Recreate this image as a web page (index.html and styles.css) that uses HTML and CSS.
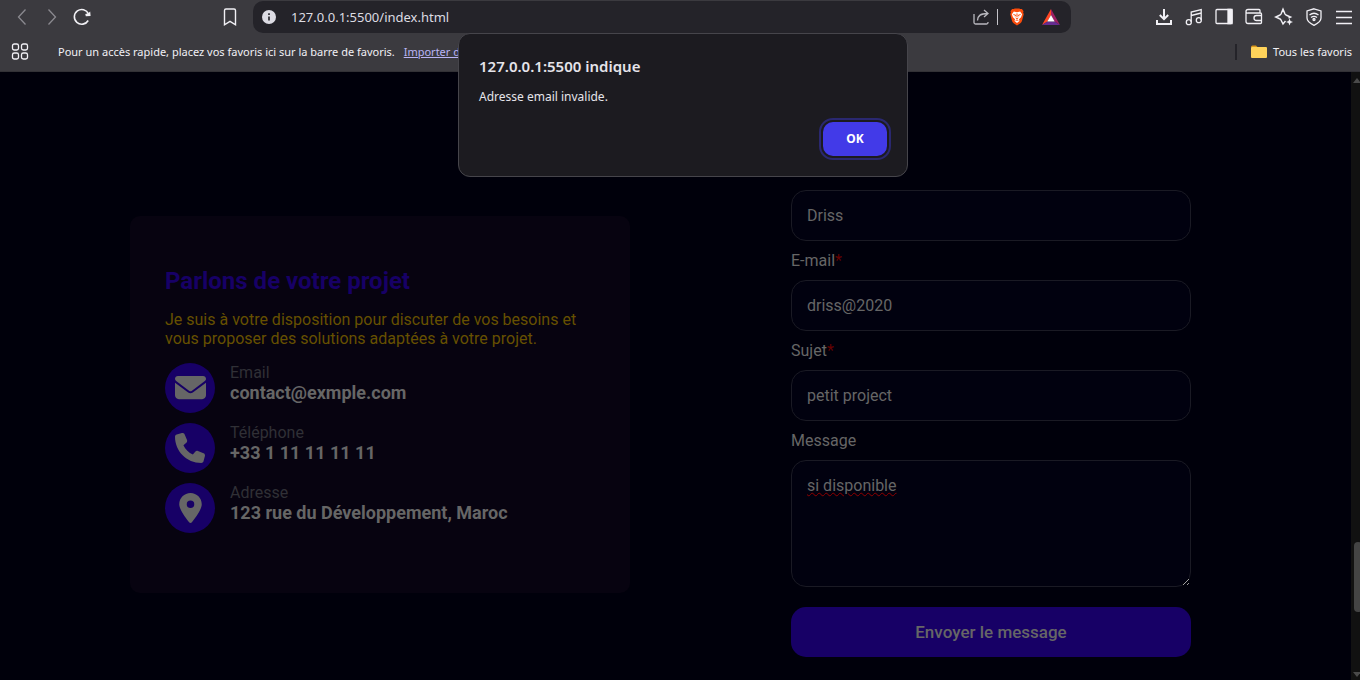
FILE: index.html
```html
<!DOCTYPE html>
<html lang="fr">
<head>
<meta charset="utf-8">
<meta name="viewport" content="width=device-width, initial-scale=1">
<title>Contact</title>
<link rel="stylesheet" href="styles.css">
</head>
<body>
<header class="chrome">
  <div class="toolbar">
    <nav class="nav-buttons">
      <button class="icon-btn dim" aria-label="Retour"><svg width="20" height="20" viewBox="0 0 20 20"><path d="M13.5 2.5 6.500 10l7 7.500"/></svg></button>
      <button class="icon-btn dim" aria-label="Avancer"><svg width="20" height="20" viewBox="0 0 20 20"><path d="m6.500 2.500 7 7.500-7 7.500"/></svg></button>
      <button class="icon-btn" aria-label="Recharger"><svg width="20" height="20" viewBox="0 0 20 20"><path stroke-width="1.600" d="M16.200 13.500A7.400 7.400 0 1 1 16.500 6.800"/><path d="m18.200 4.500.400 4.500-4.800.300-.500-2.300 3-.800z" fill="currentColor" stroke="none"/></svg></button>
    </nav>
    <button class="icon-btn" aria-label="Ajouter aux favoris"><svg width="20" height="20" viewBox="0 0 20 20"><path stroke-width="1.400" d="M4.500 3.500q0-1.500 1.500-1.500h8q1.500 0 1.500 1.500v14.300l-5.500-3.500-5.500 3.500z"/></svg></button>
    <div class="address">
      <button class="info-btn" aria-label="Informations du site"><svg width="16" height="16" viewBox="0 0 16 16"><circle cx="8" cy="8" r="7" fill="#dddce4" stroke="none"/><path d="M8 7.500v4M8 4.200v1.800" stroke="#2a292f" stroke-width="1.700"/></svg></button>
      <input class="url" type="text" aria-label="Adresse" value="127.0.0.1:5500/index.html">
      <button class="share-btn" aria-label="Partager"><svg width="18" height="18" viewBox="0 0 18 18"><path d="M2 6v8.500q0 1.500 1.500 1.500h11q1.500 0 1.500-1.500V14M5.500 12.500C5.500 8 8 5.500 15.500 5.500M12 2l4 3.500-4 3.500"/></svg></button>
      <span class="bar-divider"></span>
      <button class="shield-btn" aria-label="Brave Shields"><svg width="18" height="18" viewBox="0 0 18 20"><path d="m5.500 1 1-.500h5l1 .500 2 .200 1.800 2.300-.500 1.200.700 2.300-2 7.500q-.500 1.500-1.800 2.500L9 19.500 5.300 17q-1.300-1-1.800-2.500L1.500 7l.700-2.300-.500-1.200L3.500 1.200z" fill="#fb4c0b" stroke="none"/><path d="m5.500 4 3.500.600 3.500-.600 2.200 3-1.200 3.300-2.300 2.200.600 2L9 16.700 6.200 14.500l.600-2-2.300-2.200L3.300 7z" fill="#fff" stroke="none"/><path d="m5 7.300 2.500.700-.5 1.300M13 7.300l-2.500.700.5 1.300M9 6v4M7.500 11 9 11.800l1.500-.800M7.500 14 9 13.200l1.500.800" stroke="#fb4c0b" stroke-width="1.100"/></svg></button>
      <button class="bat-btn" aria-label="Brave Rewards"><svg width="20" height="18" viewBox="0 0 20 18"><g stroke="none"><path d="M10 1 1 17l5.500-3.500L10 7z" fill="#ff4724"/><path d="M10 1v6l3.500 6.500L19 17z" fill="#9e1f63"/><path d="m1 17 5.500-3.500h7L19 17z" fill="#662d91"/><path d="m10 7-3.700 6.500h7.400z" fill="#fff"/></g></svg></button>
    </div>
    <div class="tools">
      <button class="icon-btn" aria-label="Téléchargements"><svg width="20" height="20" viewBox="0 0 20 20"><path stroke-width="2" d="M10 2v10M5.800 8 10 12.200 14.200 8M3 13v4h14v-4"/></svg></button>
      <button class="icon-btn" aria-label="Multimédia"><svg width="20" height="20" viewBox="0 0 20 20"><path d="M7.200 15V5l10-2.500V13M7.200 8.500l10-2.500"/><circle cx="4.800" cy="15.200" r="2.500"/><circle cx="14.800" cy="13.200" r="2.500"/></svg></button>
      <button class="icon-btn" aria-label="Panneau latéral"><svg width="20" height="20" viewBox="0 0 20 20"><rect x="2" y="2.500" width="16" height="14" rx="1"/><path d="M14 2.500h4v14h-4z" fill="currentColor"/></svg></button>
      <button class="icon-btn" aria-label="Portefeuille"><svg width="20" height="20" viewBox="0 0 20 20"><path d="M16 6V3.500q0-1-1-1H4Q2 2.500 2 4.500T4 6h12.500q1 0 1 1v8.500q0 1-1 1H4q-2 0-2-2v-10M17.500 8.500h-5a2.300 2.300 0 0 0 0 5h5"/></svg></button>
      <button class="icon-btn" aria-label="Leo"><svg width="20" height="20" viewBox="0 0 20 20"><path stroke-width="1.500" d="M11.500 14 9 17 7 13q-.500-1-1.500-1.300L1.800 10l3.700-1.700Q6.500 8 7 7l2-4.800L11 7q.500 1 1.500 1.300L16.500 10l-2 1"/><path d="m15.500 11.500 1 2.500 2.500 1-2.500 1-1 2.500-1-2.500-2.500-1 2.500-1z" fill="currentColor" stroke="none"/></svg></button>
      <button class="icon-btn" aria-label="VPN"><svg width="20" height="20" viewBox="0 0 20 20"><path d="m10 1.800 7 2.200v7q0 4-7 7.300Q3 15 3 11V4zM5.500 8q4.500-3.500 9 0M7 10.500q3-2.300 6 0"/><circle cx="10" cy="12.500" r="1"/></svg></button>
      <button class="icon-btn" aria-label="Menu"><svg width="20" height="20" viewBox="0 0 20 20"><path d="M2 4.500h16M2 10.500h16M2 16.500h16"/></svg></button>
    </div>
  </div>
  <div class="bookmarks">
    <button class="icon-btn" aria-label="Applications"><svg width="20" height="20" viewBox="0 0 20 20"><rect x="2.500" y="2" width="6" height="6" rx="1.800"/><rect x="11.500" y="2" width="6" height="6" rx="1.800"/><rect x="2.500" y="11" width="6" height="6" rx="1.800"/><rect x="11.500" y="11" width="6" height="6" rx="1.800"/></svg></button>
    <p class="hint">Pour un accès rapide, placez vos favoris ici sur la barre de favoris. <a href="#">Importer des</a></p>
    <span class="mark-divider"></span>
    <button class="all-marks"><svg width="16" height="14" viewBox="0 0 16 14"><path d="M0 2q0-1.500 1.500-1.500H5L7 2.500H0z" fill="#d9951a" stroke="none"/><rect y="2" width="16" height="11" rx="1" fill="#ffd35a" stroke="none"/></svg>Tous les favoris</button>
  </div>
</header>

<div class="viewport">
  <main class="contact">
    <section class="card">
      <h2>Parlons de votre projet</h2>
      <p class="lead">Je suis à votre disposition pour discuter de vos besoins et vous proposer des solutions adaptées à votre projet.</p>
      <ul class="infos">
        <li>
          <span class="badge"><svg width="31" height="31" viewBox="0 0 512 512"><path d="M48 64C21.500 64 0 85.500 0 112c0 15.100 7.100 29.300 19.200 38.400L236.800 313.600c11.400 8.500 27 8.500 38.400 0L492.800 150.400c12.100-9.100 19.200-23.300 19.200-38.400c0-26.500-21.500-48-48-48H48zM0 176V384c0 35.300 28.700 64 64 64H448c35.300 0 64-28.700 64-64V176L294.400 339.200c-22.800 17.100-54 17.100-76.800 0L0 176z"/></svg></span>
          <div><span class="kind">Email</span><strong>contact@exmple.com</strong></div>
        </li>
        <li>
          <span class="badge"><svg width="30" height="30" viewBox="0 0 512 512"><path d="M164.900 24.600c-7.700-18.600-28-28.500-47.400-23.200l-88 24C12.100 30.200 0 46 0 64C0 311.400 200.600 512 448 512c18 0 33.800-12.100 38.600-29.500l24-88c5.300-19.400-4.600-39.700-23.200-47.400l-96-40c-16.300-6.800-35.200-2.100-46.300 11.600L304.700 368C234.300 334.700 177.300 277.700 144 207.300L193.300 167c13.700-11.200 18.400-30 11.600-46.300l-40-96z"/></svg></span>
          <div><span class="kind">Téléphone</span><strong>+33 1 11 11 11 11</strong></div>
        </li>
        <li>
          <span class="badge"><svg width="23" height="30" viewBox="0 0 384 512"><path d="M215.700 499.200C267 435 384 279.400 384 192C384 86 298 0 192 0S0 86 0 192c0 87.400 117 243 168.300 307.200c12.300 15.300 35.100 15.300 47.400 0zM192 128a64 64 0 1 1 0 128 64 64 0 1 1 0-128z"/></svg></span>
          <div><span class="kind">Adresse</span><strong>123 rue du Développement, Maroc</strong></div>
        </li>
      </ul>
    </section>
    <form class="form">
      <input type="text" aria-label="Nom" value="Driss">
      <label for="email">E-mail<span class="req">*</span></label>
      <input id="email" type="text" value="driss@2020">
      <label for="subject">Sujet<span class="req">*</span></label>
      <input id="subject" type="text" value="petit project">
      <label for="message">Message</label>
      <textarea id="message">si disponible</textarea>
      <button class="send" type="button">Envoyer le message</button>
    </form>
  </main>
  <div class="scrollbar" aria-hidden="true">
    <span class="arrow up"></span>
    <span class="track-before"></span>
    <span class="thumb"></span>
    <span class="track-after"></span>
    <span class="arrow down"></span>
  </div>
</div>

<dialog class="alert" open aria-labelledby="alert-title">
  <h1 id="alert-title">127.0.0.1:5500 indique</h1>
  <p>Adresse email invalide.</p>
  <button class="ok" type="button">OK</button>
</dialog>
</body>
</html>
```
FILE: styles.css
```css
* { box-sizing: border-box; }

body {
  margin: 0;
  min-height: 100vh;
  display: flex;
  flex-direction: column;
  overflow: hidden;
  background: #00000b;
  font-family: Roboto, sans-serif;
}

h1, h2, p, ul { margin: 0; padding: 0; }

button {
  border: 0;
  padding: 0;
  background: none;
  color: inherit;
  font: inherit;
}

/* Browser bars */
.chrome {
  background: #3b3a3f;
  border-bottom: 1px solid #323136;
  color: #f1f0f5;
  font-family: "Segoe UI", "Noto Sans", sans-serif;
}

.chrome svg {
  display: block;
  fill: none;
  stroke: currentColor;
  stroke-width: 1.3;
}

.toolbar {
  display: flex;
  align-items: center;
  height: 34px;
  padding: 0 1px 0 7px;
}

.nav-buttons, .tools { display: flex; }
.nav-buttons { margin-right: auto; }

.icon-btn {
  flex: none;
  width: 30px;
  height: 30px;
  display: grid;
  place-items: center;
}

.dim { color: #8b8a90; }

.address {
  flex: 0 1 818px;
  height: 32px;
  margin: 0 78px 0 8px;
  padding: 0 10px 0 8px;
  display: flex;
  align-items: center;
  background: #242329;
  border-radius: 10px;
}

.url {
  flex: 1;
  min-width: 0;
  margin-left: 14px;
  padding: 0;
  border: 0;
  background: none;
  color: #dddce2;
  font: 13px/20px "Segoe UI", "Noto Sans", sans-serif;
}

.share-btn { color: #b9b8be; }

.bar-divider {
  width: 1px;
  height: 16px;
  margin: 0 10px 0 7px;
  background: #c4c3c9;
}

.bat-btn { margin-left: 15px; }

.bookmarks {
  display: flex;
  align-items: center;
  height: 37px;
  padding: 0 8px 2px 5px;
  font-size: 11px;
  line-height: 16px;
  white-space: nowrap;
}

.hint { margin: 0 auto 0 23px; }

.hint a {
  margin-left: 6px;
  color: #b9b4f5;
}

.mark-divider {
  width: 2px;
  height: 16px;
  margin-right: 14px;
  background: #242329;
}

.all-marks {
  display: flex;
  align-items: center;
  gap: 6px;
}

/* Page */
.viewport {
  flex: 1;
  display: flex;
}

.contact {
  flex: 1;
  display: flex;
  justify-content: center;
  align-items: center;
  gap: 161px;
  padding: 79px 30px 23px 0;
}

.card {
  flex: 0 1 500px;
  padding: 51px 35px 60px;
  background: #070310;
  border-radius: 10px;
}

.card h2 {
  color: #170066;
  font-size: 24px;
  line-height: 29px;
}

.lead {
  margin: 14px 0 15px;
  color: #665000;
  font-size: 16px;
  line-height: 19px;
}

.infos {
  display: grid;
  gap: 10px;
  list-style: none;
}

.infos li {
  display: flex;
  gap: 15px;
}

.badge {
  flex: none;
  width: 50px;
  height: 50px;
  display: grid;
  place-items: center;
  background: #170066;
  border-radius: 50%;
  fill: #666;
}

.kind {
  display: block;
  color: #303036;
  font-size: 16px;
  line-height: 19px;
}

.infos strong {
  display: block;
  color: #666;
  font-size: 18px;
  line-height: 21px;
}

.form {
  flex: 0 1 400px;
  display: grid;
  gap: 10px;
  padding-top: 39px;
  color: #666;
  font-size: 16px;
  line-height: 19px;
}

.req { color: #660000; }

.form input, .form textarea {
  width: 100%;
  height: 51px;
  padding: 15px;
  border: 1px solid #1a1a24;
  border-radius: 15px;
  background: #01010f;
  color: #666;
  font: 16px/19px Roboto, sans-serif;
}

.form textarea {
  height: 127px;
  text-decoration: underline wavy #900000 1px;
}

.send {
  height: 50px;
  margin-top: 10px;
  border-radius: 15px;
  background: #170066;
  color: #666;
  font-size: 17px;
  font-weight: 500;
}

.scrollbar {
  width: 9px;
  display: flex;
  flex-direction: column;
  align-items: flex-start;
  padding: 6px 0 3px 2px;
  overflow: hidden;
  background: #111;
}

.arrow {
  border: 4px solid transparent;
}

.up { border-top: 0; border-bottom: 5px solid #4a4a4a; }
.down { border-bottom: 0; border-top: 5px solid #4a4a4a; }
.track-before { flex: 459; }
.track-after { flex: 60; }

.thumb {
  width: 8px;
  height: 70px;
  margin-left: 1px;
  border-radius: 4px;
  background: #444;
}

/* Alert box above the page */
.alert {
  position: absolute;
  top: 33px;
  left: 458px;
  width: 450px;
  margin: 0;
  padding: 20px;
  display: flex;
  flex-direction: column;
  border: 1px solid #46454b;
  border-radius: 12px;
  background: #1c1b20;
  color: #e5e4ea;
  font: 12px/18px "Segoe UI", "Noto Sans", sans-serif;
}

.alert h1 {
  font-size: 15px;
  font-weight: 600;
  line-height: 24px;
}

.alert p { margin: 10px 0 16px; }

.ok {
  align-self: flex-end;
  width: 64px;
  height: 34px;
  border-radius: 10px;
  outline: 2px solid #2a2870;
  outline-offset: 2px;
  background: #423ae8;
  color: #fff;
  font-weight: 700;
}
```
